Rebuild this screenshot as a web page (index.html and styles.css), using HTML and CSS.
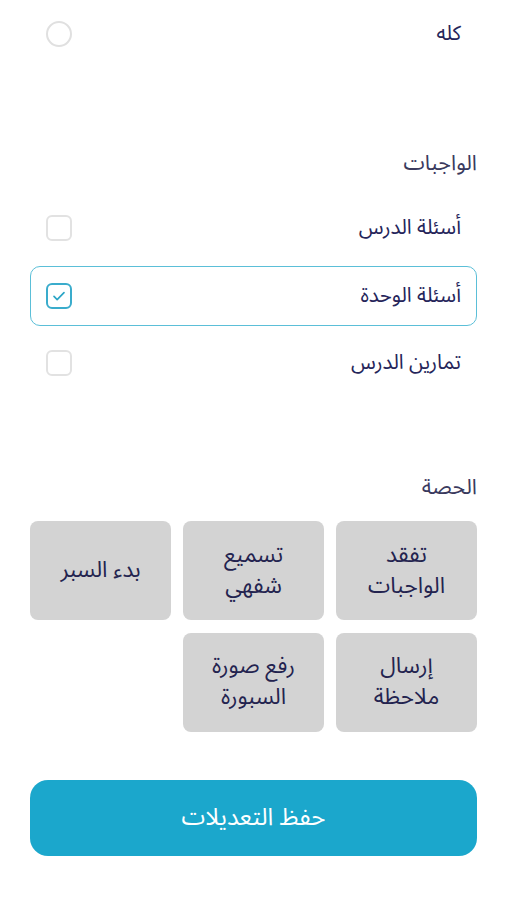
FILE: index.html
```html
<!DOCTYPE html>
<html lang="ar" dir="rtl">
<head>
<meta charset="utf-8">
<link rel="stylesheet" href="styles.css">
</head>
<body>
<main class="page">
  <div class="row">
    <span class="label">كله</span>
    <span class="radio"></span>
  </div>

  <h2 class="heading heading-hw">الواجبات</h2>
  <div class="list">
    <div class="row">
      <span class="label">أسئلة الدرس</span>
      <span class="check"></span>
    </div>
    <div class="row selected">
      <span class="label">أسئلة الوحدة</span>
      <span class="check checked">
        <svg viewBox="0 0 24 24" width="20" height="20"><path d="M6 12.5l3.8 3.8L18 8" fill="none" stroke="#2aa5c6" stroke-width="2" stroke-linecap="round" stroke-linejoin="round"/></svg>
      </span>
    </div>
    <div class="row">
      <span class="label">تمارين الدرس</span>
      <span class="check"></span>
    </div>
  </div>

  <h2 class="heading heading-class">الحصة</h2>
  <div class="tiles">
    <div class="tile"><span class="line">تفقد</span><span class="line">الواجبات</span></div>
    <div class="tile"><span class="line">تسميع</span><span class="line">شفهي</span></div>
    <div class="tile"><span class="line">بدء السبر</span></div>
    <div class="tile"><span class="line">إرسال</span><span class="line">ملاحظة</span></div>
    <div class="tile"><span class="line">رفع صورة</span><span class="line">السبورة</span></div>
  </div>

  <button class="save">حفظ التعديلات</button>
</main>
</body>
</html>
```

FILE: styles.css
```css
html, body {
  margin: 0;
  padding: 0;
  background: #ffffff;
}
body {
  font-family: "Noto Sans Arabic", "Noto Sans", "DejaVu Sans", sans-serif;
  color: #25255a;
}
.page {
  padding: 4px 30px 0 30px;
}
.row {
  height: 60px;
  box-sizing: border-box;
  display: flex;
  align-items: center;
  justify-content: space-between;
  padding: 0 15px;
  border: 1.5px solid transparent;
  border-radius: 10px;
}
.row.selected {
  border-color: #5bbfd8;
}
.label {
  font-size: 20.5px;
  line-height: 26px;
}
.radio {
  width: 26px;
  height: 26px;
  box-sizing: border-box;
  border: 2px solid #e0e0e0;
  border-radius: 50%;
}
.check {
  width: 26px;
  height: 26px;
  box-sizing: border-box;
  border: 2px solid #e2e2e2;
  border-radius: 6px;
  display: flex;
  align-items: center;
  justify-content: center;
}
.check.checked {
  border-color: #3aaccc;
}
.heading {
  margin: 0;
  font-weight: normal;
  font-size: 21.5px;
  line-height: 30px;
  color: #3a3a5e;
}
.heading-hw {
  margin-top: 84px;
  margin-bottom: 20px;
}
.list {
  display: flex;
  flex-direction: column;
  gap: 7.5px;
}
.heading-class {
  margin-top: 79px;
  margin-bottom: 19px;
}
.tiles {
  display: grid;
  grid-template-columns: repeat(3, 1fr);
  gap: 12.5px 12px;
}
.tile {
  height: 99px;
  background: #d3d3d3;
  border-radius: 8px;
  display: flex;
  flex-direction: column;
  align-items: center;
  justify-content: center;
  text-align: center;
  font-size: 22.5px;
  line-height: 31px;
  color: #23234f;
}
.line {
  display: block;
  height: 31px;
}
.save {
  display: block;
  width: 100%;
  margin-top: 48px;
  height: 76px;
  border: none;
  border-radius: 18px;
  background: #1ba7cc;
  color: #ffffff;
  font-family: inherit;
  font-size: 24px;
}
```
